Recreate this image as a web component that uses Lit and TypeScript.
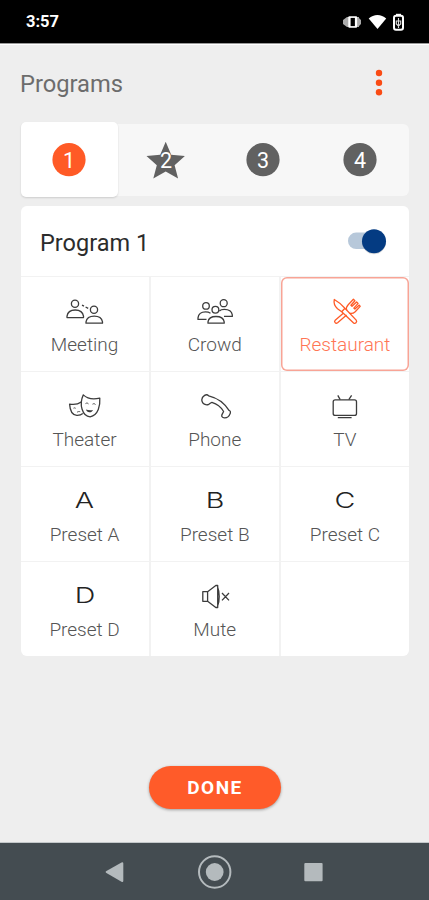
import { LitElement, html, svg, css } from "lit";
import { customElement, property, state } from "lit/decorators.js";
import { classMap } from "lit/directives/class-map.js";

const icons: Record<string, unknown> = {
  meeting: svg`
    <circle cx="10" cy="5.8" r="3.6"/><path d="M2 19.6v-1.4C2.6 13.6 6 12 10.200 12s7.600 1.800 8.300 6.200v1.400z"/>
    <circle cx="29" cy="11.800" r="3.600"/><path d="M21 25.200v-1.400c.7-4 4-5.700 8.200-5.700s7.600 1.700 8.300 5.700v1.400z"/>
    <path d="M17 7.200l2 1M20.600 9l2.600 1.400"/>`,
  crowd: svg`
    <circle cx="11" cy="7.900" r="3.300"/><circle cx="20.400" cy="11.700" r="3.400"/><circle cx="28.700" cy="5.200" r="3.500"/>
    <path d="M13 25.200v-1.300c.5-3.800 3.600-5.400 8-5.400s7.600 1.600 8.200 5.400v1.300z"/>
    <path d="M11.500 21.400H3v-1.500c.5-4 3.500-6 7.500-6 2.200 0 3.600.4 5 1.300"/>
    <path d="M29 18.400h8.300v-1.500c-.6-4-3.600-5.600-8-5.600-2.200 0-3.800.5-5 1.600"/>`,
  restaurant: svg`
    <path d="M9.300 1.500c-.8 3.600.4 6.700 3.200 9.300l4.200 3 11.900 11.100q1.200.9 2.400-.2t.2-2.600L19.900 10.200C16.600 6.600 13.200 3.700 9.300 1.500zM16.700 13.800l3.200-3.600"/>
    <path d="M18.300 15.300L10.200 22.200q-1.200 1.200-.1 2.400t2.500.1l9-7.600M21.700 12.100c-.6-2 0-3.900 1.500-5.400l5.200-5.400 1.500 1.400-4 4.600 1.100 1 4.600-4.300 1.500 1.400-4.300 4.700 1.100 1 4.400-4 .9 1.300-5 5.300c-1.700 1.600-3.600 2.100-5.700 1.500"/>`,
  theater: svg`
    <path d="M18.300 1.900c4.200 4 9.700 4.900 16.500 3.200.5 7-1.300 17-9.700 18.700C17.300 23.300 13.800 11.500 18.300 1.900z"/>
    <path d="M16.300 9c-3.300 2.300-6.700 3-11.700 2.100.3 5.300 2.200 10.800 7.200 11.300 2.300.1 4.300-.3 6-1.800"/>
    <path class="fine" d="M20.500 10.600c1-.8 2.200-.7 3 .3M27.500 11.200c1-.8 2.200-.6 3 .3M8.500 15.200c.8-.5 1.600-.4 2.200.2M12 19.300c1-.8 2-.9 3.200-.6"/>
    <path class="solid" d="M21 16.500c2 .7 4.500 1 7 .4-.7 1.700-2 2.500-3.600 2.400-1.700 0-2.900-1-3.400-2.800z"/>`,
  phone: svg`
    <path d="M7.200 8.700c-.9-2.300.3-4.900 2.400-6.300 1.500-1 3.100-.7 4.100.5 8.700 2.100 15.600 7.100 20.300 14.500 1.600.4 1.700 1.800 1 3.500-.9 2.500-3 4.100-5.600 4-2.400-.1-3.100-1.800-2.300-3.500l1.500-2.900c-2.500-4.300-6.700-7.600-11.700-9.100-1.200.2-2 1.300-3.200 2-2.300 1.200-5.500-.1-6.500-2.700z"/>`,
  tv: svg`
    <rect x="8.200" y="6.800" width="23.300" height="15.600" rx="2"/>
    <path d="M12.800 2.400l2.400 4.200M26.600 2.400l-2.800 4.200M12.800 24.700h13.800"/>`,
  mute: svg`
    <path d="M7.800 8.700h4.800v9.600H7.800zM12.600 8.700l8.200-6.200h1.900v22h-1.900l-8.200-6.200M22.700 4.200c2 4.800 2 13.800 0 18.500M27 10l7 7.400M34 10l-7 7.400"/>`,
};

@customElement("program-tab")
class ProgramTab extends LitElement {
  @property({ type: Number }) num = 1;
  @property({ type: Boolean }) selected = false;
  @property({ type: Boolean }) star = false;
  static styles = css`
    :host { display: flex; flex: 1; }
    .tab { flex: 1; display: grid; place-items: center; border-radius: 5px; }
    .selected { background: #fff; margin: -2px 0 -1px; box-shadow: 0 1px 2px rgba(0,0,0,.14); }
    svg { width: 40px; height: 40px; fill: #616161; display: block; }
    .selected svg { fill: #ff5a26; }
    text { fill: #fff; font: 21.500px Roboto, sans-serif; text-anchor: middle; }
  `;
  render() {
    return html`<div class=${classMap({ tab: true, selected: this.selected })}>
      <svg viewBox="0 0 40 40">
        ${this.star
          ? svg`<path d="M19.700 1.800l5.500 13 13.700 1.100-10.300 9.400 3.500 13.100-12.400-7-12.400 7 3.500-13.100L.5 15.900l13.700-1.100z"/>`
          : svg`<circle cx="20" cy="19.700" r="16.600"/>`}
        <text x="20" y="28">${this.num}</text>
      </svg>
    </div>`;
  }
}

@customElement("program-option")
class ProgramOption extends LitElement {
  @property() label = "";
  @property() icon = "";
  @property({ type: Boolean }) selected = false;
  static styles = css`
    :host { display: flex; background: #fff; min-width: 0; }
    .cell { flex: 1; display: flex; flex-direction: column; align-items: center; padding-top: 21px; color: #3c3c3c; white-space: nowrap; }
    .selected { color: #ff5a26; border-radius: 6px; box-shadow: inset 0 0 0 1.500px #f8a496; }
    svg { width: 40px; height: 28px; fill: none; stroke: currentColor; stroke-width: 1.300; stroke-linejoin: round; display: block; }
    .fine { stroke-width: .9; }
    .solid { fill: currentColor; stroke: none; }
    .letter { height: 28px; font: 300 22px/24px Inter, sans-serif; transform: scaleX(1.300); color: #222; }
    .label { font: 300 19px/24px Roboto, sans-serif; margin-top: 7px; color: #555; }
    .selected .label { color: #ff7555; }
  `;
  render() {
    const drawing = icons[this.icon];
    return html`<div class=${classMap({ cell: true, selected: this.selected })}>
      ${drawing ? html`<svg viewBox="0 0 40 28">${drawing}</svg>` : html`<span class="letter">${this.icon}</span>`}
      <span class="label">${this.label}</span>
    </div>`;
  }
}

@customElement("app-root")
class AppRoot extends LitElement {
  @state() private active = 1;
  @state() private choice = "Restaurant";
  private options = [
    ["meeting", "Meeting"], ["crowd", "Crowd"], ["restaurant", "Restaurant"],
    ["theater", "Theater"], ["phone", "Phone"], ["tv", "TV"],
    ["A", "Preset A"], ["B", "Preset B"], ["C", "Preset C"],
    ["D", "Preset D"], ["mute", "Mute"], ["", ""],
  ];
  static styles = css`
    :host { display: flex; flex-direction: column; height: 900px; background: #eee; font-family: Roboto, sans-serif; overflow: hidden; }
    .status { height: 43px; background: #000; color: #fff; display: flex; align-items: center; justify-content: space-between; padding: 0 23px 0 26px; box-shadow: 0 1px 0 #999, 0 2px 0 #fff; box-sizing: border-box; flex: none; }
    .time { font: 700 16.500px/20px Roboto, sans-serif; padding-top: 1px; }
    .status svg { display: block; width: 64px; height: 18px; padding-top: 1px; }
    header { display: flex; align-items: center; justify-content: space-between; height: 79px; padding: 0 42px 0 20px; }
    h1 { margin: 0; font: 400 23.700px/28px Roboto, sans-serif; color: #6c6c6c; padding-top: 2px; }
    .more { width: 16px; height: 30px; fill: #fa4b14; }
    .tabs { display: flex; height: 72px; margin: 2px 20px 0 20.500px; background: #f7f7f7; border-radius: 6px; flex: none; }
    .card { margin: 10px 20px 0 20.500px; background: #f2f2f2; border-radius: 6px; overflow: hidden; flex: none; }
    .head { height: 70px; background: #fff; display: flex; align-items: center; justify-content: space-between; padding: 0 22px 0 19.500px; }
    h2 { margin: 0; font: 400 23.500px/28px Roboto, sans-serif; color: #2c2c2c; padding-top: 3px; }
    .switch { width: 42px; height: 32px; display: block; }
    .grid { display: grid; grid-template-columns: repeat(3, 1fr); grid-auto-rows: 94px; gap: 1px 2px; padding-top: 1px; }
    .done { align-self: center; margin-top: 110px; width: 132px; height: 43px; border: 0; border-radius: 22px; background: #ff5b29; color: #fff; font: 700 19px/22px Roboto, sans-serif; letter-spacing: 1.500px; padding: 1px 0 0 1px; box-shadow: 0 1px 3px rgba(0,0,0,.35); }
    nav { margin-top: auto; height: 57px; background: #444c51; box-shadow: 0 -1px 0 #c4c8ca; flex: none; }
    nav svg { width: 429px; height: 57px; display: block; fill: #b4babd; }
  `;
  render() {
    return html`
      <div class="status">
        <span class="time">3:57</span>
        <svg viewBox="0 0 64 18">
          <path fill="#aaa" d="M5 4h12v10H5l-4-3V7z M16 4l3 3v4l-3 3z"/>
          <rect x="6.300" y="3.200" width="8.800" height="11.600" rx="1" fill="#fff"/><rect x="8.600" y="4.900" width="4.300" height="8.200" fill="#000"/>
          <path fill="#fff" d="M26.700 5.500c5-4.700 12.500-4.700 17.500 0L35.500 16z"/>
          <rect x="52" y="2.800" width="9" height="14" rx="2" fill="none" stroke="#fff" stroke-width="2"/>
          <path fill="#fff" d="M54 .8h5v2h-5z"/>
          <path fill="none" stroke="#ddd" stroke-width="1.100" d="M56.500 5v10M54.300 8h4.400v3l-2.200 2-2.200-2z"/>
        </svg>
      </div>
      <header>
        <h1>Programs</h1>
        <svg class="more" viewBox="0 0 16 30"><circle cx="8" cy="5" r="3.200"/><circle cx="8" cy="14.700" r="3.200"/><circle cx="8" cy="24.300" r="3.200"/></svg>
      </header>
      <div class="tabs">
        ${[1, 2, 3, 4].map((n) => html`<program-tab .num=${n} .star=${n === 2} .selected=${n === this.active} @click=${() => (this.active = n)}></program-tab>`)}
      </div>
      <section class="card">
        <div class="head">
          <h2>Program ${this.active}</h2>
          <svg class="switch" viewBox="0 0 42 32">
            <rect x="3" y="7.600" width="34" height="16.500" rx="8.200" fill="#b7c8da"/>
            <circle cx="29" cy="17.300" r="12" fill="#000" opacity=".14"/><circle cx="29" cy="16.300" r="12" fill="#043b82"/>
          </svg>
        </div>
        <div class="grid">
          ${this.options.map(([icon, label]) => html`<program-option .icon=${icon} .label=${label} .selected=${label === this.choice}
            @click=${() => { if (label) this.choice = label; }}></program-option>`)}
        </div>
      </section>
      <button class="done">DONE</button>
      <nav>
        <svg viewBox="0 0 429 57">
          <path d="M106 28.200q-.8.800 0 1.500l15.500 9q1.800.8 1.800-1V20.500q0-1.800-1.800-1z"/>
          <circle cx="214.700" cy="29" r="8.900"/><circle cx="214.700" cy="29" r="15.700" fill="none" stroke="#b4babd" stroke-width="2"/>
          <rect x="304.300" y="20" width="18.300" height="18.300" rx="1"/>
        </svg>
      </nav>`;
  }
}
